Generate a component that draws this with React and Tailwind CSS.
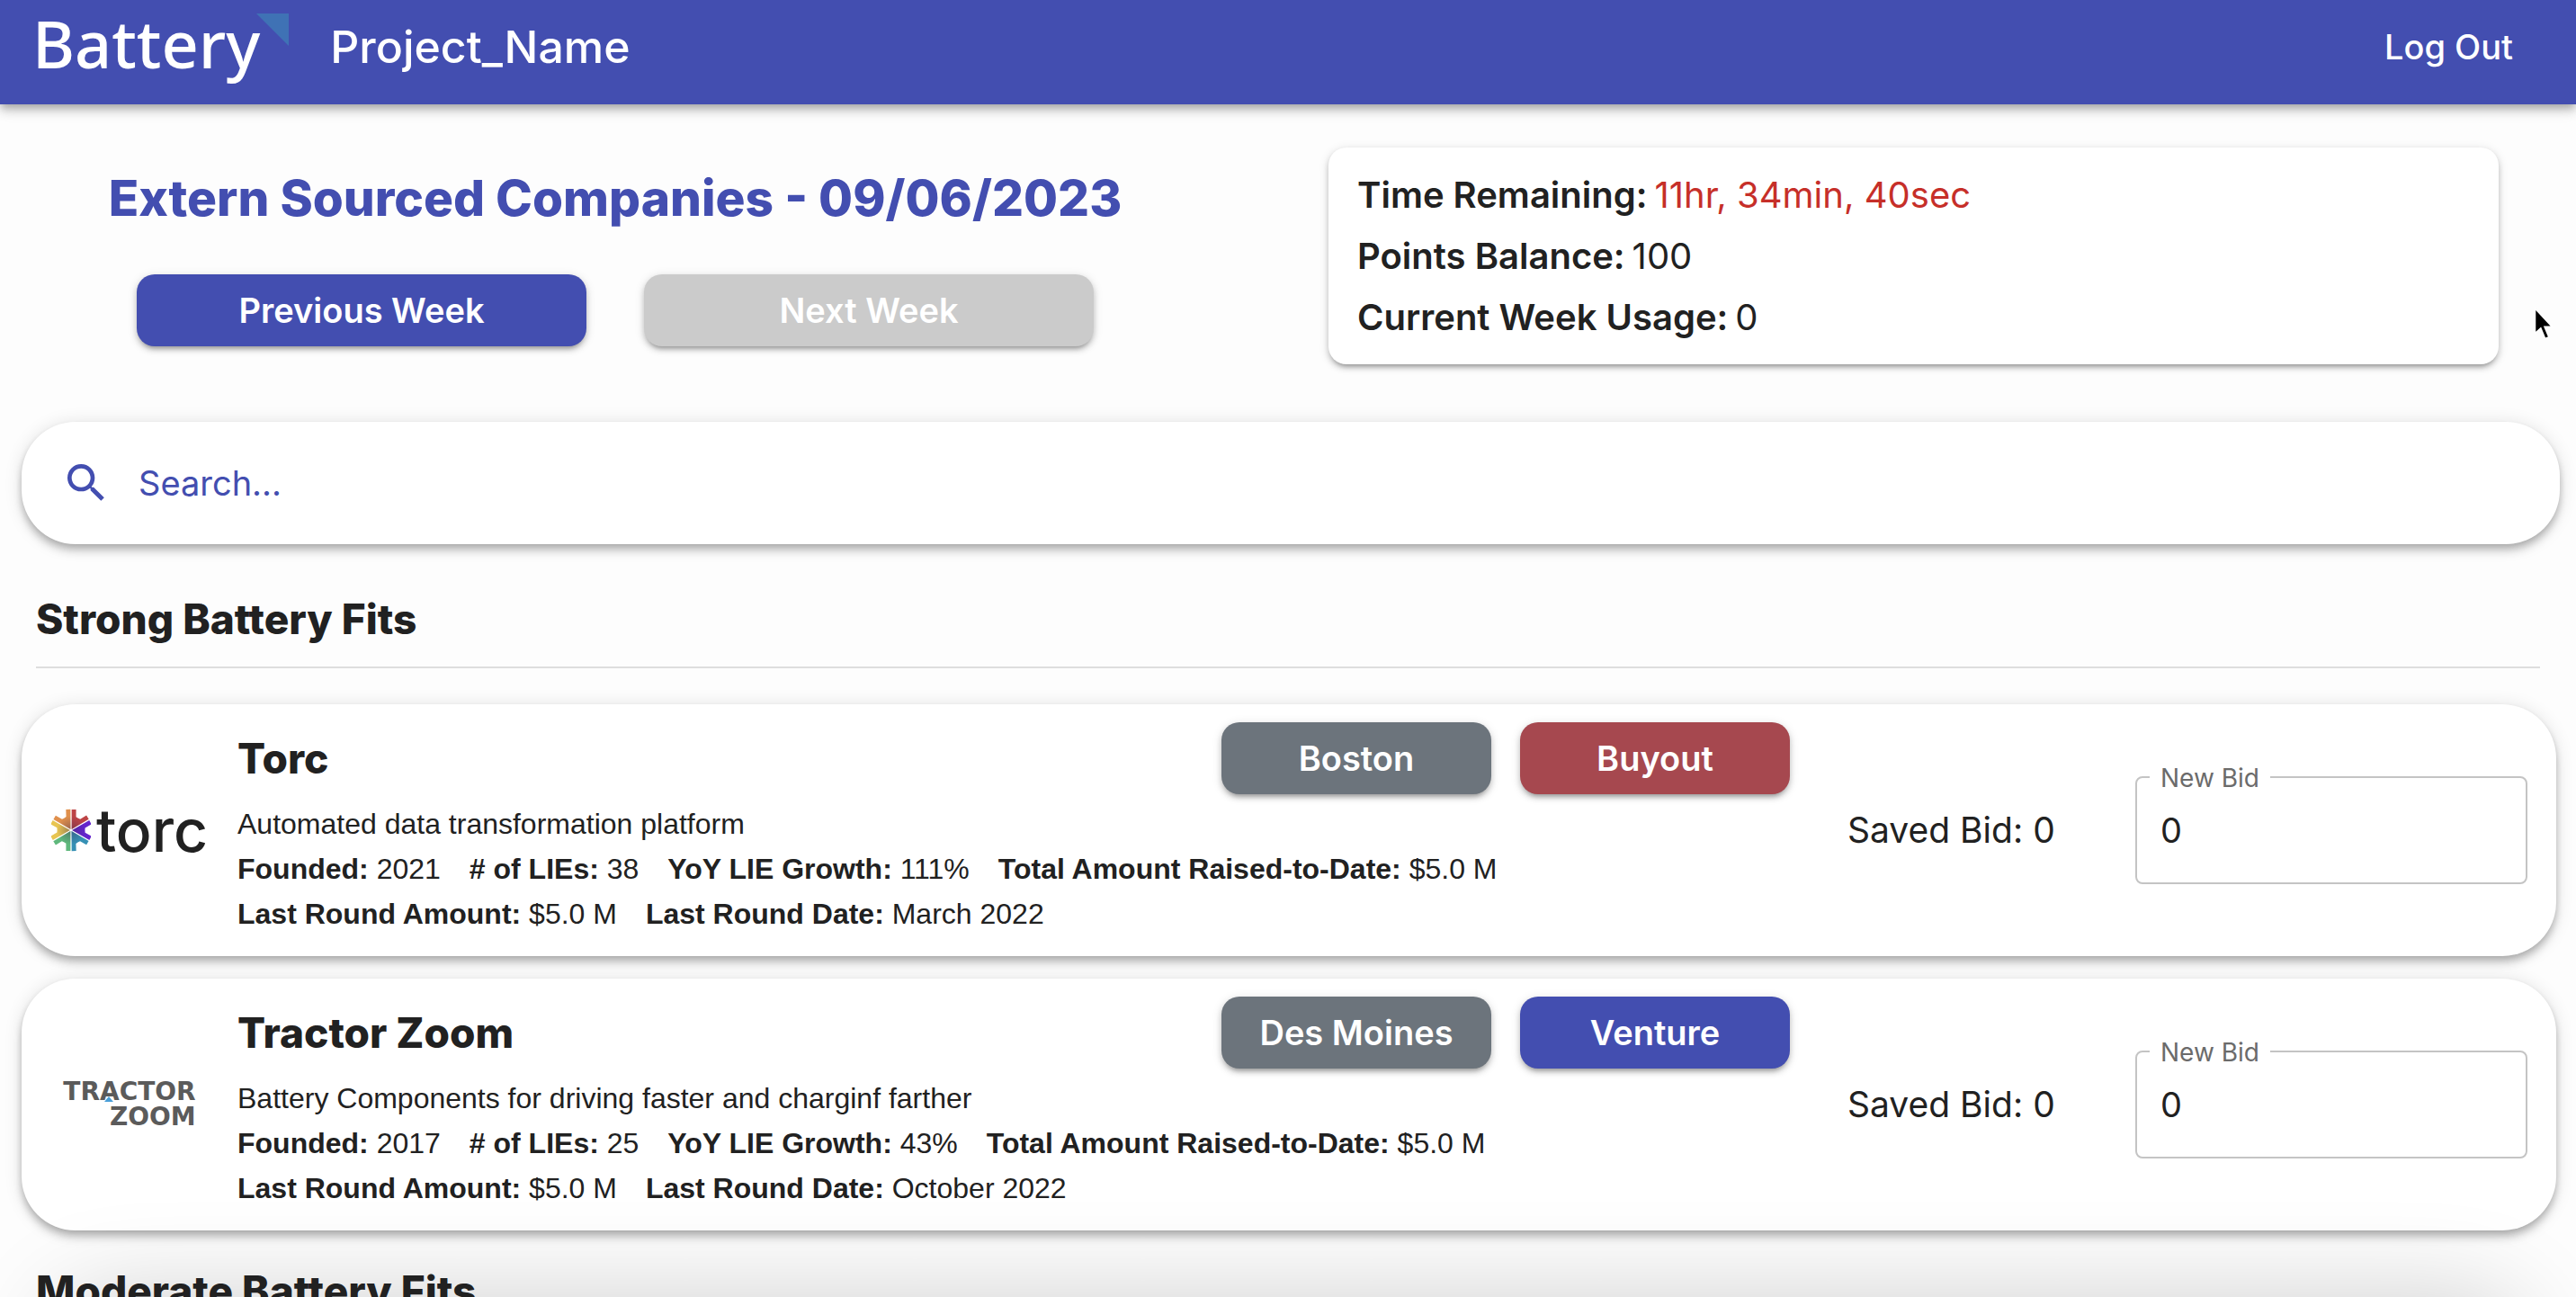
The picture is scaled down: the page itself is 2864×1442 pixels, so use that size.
import { MdSearch } from "react-icons/md";

const companies = [
  {
    id: "torc",
    name: "Torc",
    description: "Automated data transformation platform",
    founded: "2021",
    lies: "38",
    growth: "111%",
    raised: "$5.0 M",
    lastAmount: "$5.0 M",
    lastDate: "March 2022",
    city: "Boston",
    team: "Buyout",
    teamColor: "bg-[#a6484f]",
    Logo: TorcLogo,
  },
  {
    id: "tractor-zoom",
    name: "Tractor Zoom",
    description: "Battery Components for driving faster and charginf farther",
    founded: "2017",
    lies: "25",
    growth: "43%",
    raised: "$5.0 M",
    lastAmount: "$5.0 M",
    lastDate: "October 2022",
    city: "Des Moines",
    team: "Venture",
    teamColor: "bg-[#434eb0]",
    Logo: TractorZoomLogo,
  },
];

const wedges = [
  { angle: 0, color: "#bd4446" },
  { angle: 60, color: "#6424cc" },
  { angle: 120, color: "#3690b4" },
  { angle: 180, color: "#5fb87c" },
  { angle: 240, color: "#e8c552" },
  { angle: 300, color: "#e0904c" },
];

const raised =
  "shadow-[0_4px_8px_-2px_rgba(0,0,0,0.2),0_8px_10px_0_rgba(0,0,0,0.14),0_2px_20px_0_rgba(0,0,0,0.12)]";
const low =
  "shadow-[0_6px_4px_-4px_rgba(0,0,0,0.2),0_4px_6px_0_rgba(0,0,0,0.18),0_2px_12px_0_rgba(0,0,0,0.12)]";

function TorcLogo() {
  return (
    <div className="flex items-center gap-[6px]" role="img" aria-label="torc">
      <svg viewBox="-67 -71 134 142" className="h-12 w-11 shrink-0">
        <defs>
          <radialGradient id="hub" gradientUnits="userSpaceOnUse" cx="0" cy="0" r="48">
            <stop offset="0" stopColor="#3a2a50" stopOpacity="0.45" />
            <stop offset="1" stopColor="#3a2a50" stopOpacity="0" />
          </radialGradient>
        </defs>
        {wedges.map((w) => (
          <g key={w.angle} transform={`rotate(${w.angle})`}>
            <path d="M2-3V-70H17V-45L23-41L31-37L52-50L60-37Z" fill={w.color} />
            <path d="M2-3V-70H17V-45L23-41L31-37L52-50L60-37Z" fill="url(#hub)" />
          </g>
        ))}
      </svg>
      <span className="font-['Inter',sans-serif] text-[66px] leading-[48px] font-medium text-[#212121]">
        torc
      </span>
    </div>
  );
}

function TractorZoomLogo() {
  return (
    <div
      className="relative text-right font-['DejaVu_Sans',sans-serif] text-[28px] leading-7 font-bold text-[#5b5b5b]"
      role="img"
      aria-label="Tractor Zoom"
    >
      <div>TRACTOR</div>
      <div>ZOOM</div>
      <svg viewBox="0 0 10 6" className="absolute top-[19px] left-[46px] h-[6px] w-[10px]">
        <path d="M5 0L10 6H0Z" fill="#4a9fd8" />
      </svg>
    </div>
  );
}

function BatteryLogo() {
  return (
    <a href="#home" className="flex items-start text-white" aria-label="Battery">
      <span className="font-['Noto_Sans',sans-serif] text-[72px] leading-24 font-medium">
        Battery
      </span>
      <svg viewBox="0 0 36 36" className="-ml-1 mt-[15px] size-9">
        <path d="M0 0H36V36Z" fill="#3f72b5" />
      </svg>
    </a>
  );
}

function Fact({ label, value }) {
  return (
    <span className="mr-8 inline-block">
      <b>{label}:</b> {value}
    </span>
  );
}

function SectionTitle({ children }) {
  return <h2 className="text-[46px] leading-[66px] font-extrabold">{children}</h2>;
}

function CompanyCard({ company }) {
  const { Logo } = company;
  return (
    <article className={`flex min-h-[280px] items-center rounded-[60px] bg-white ${raised}`}>
      <div className="flex w-60 shrink-0 items-center justify-center">
        <Logo />
      </div>
      <div className="flex-1 self-start pt-5">
        <div className="flex items-center">
          <h3 className="flex-1 text-[46px] leading-[78px] font-extrabold">{company.name}</h3>
          <div className="flex gap-8 text-[38px] font-semibold text-white">
            <span className={`flex h-20 w-[300px] items-center justify-center rounded-[20px] bg-[#6c747c] ${low}`}>
              {company.city}
            </span>
            <span className={`flex h-20 w-[300px] items-center justify-center rounded-[20px] ${company.teamColor} ${low}`}>
              {company.team}
            </span>
          </div>
        </div>
        <div className="mt-2 font-['Liberation_Sans',sans-serif] text-[32px] leading-[50px]">
          <p>{company.description}</p>
          <p>
            <Fact label="Founded" value={company.founded} />
            <Fact label="# of LIEs" value={company.lies} />
            <Fact label="YoY LIE Growth" value={company.growth} />
            <Fact label="Total Amount Raised-to-Date" value={company.raised} />
          </p>
          <p>
            <Fact label="Last Round Amount" value={company.lastAmount} />
            <Fact label="Last Round Date" value={company.lastDate} />
          </p>
        </div>
      </div>
      <p className="w-[384px] shrink-0 pl-16 text-[39px]">Saved Bid: 0</p>
      <div className="relative mr-8 w-[436px] shrink-0">
        <input
          id={`bid-${company.id}`}
          type="text"
          inputMode="numeric"
          defaultValue="0"
          className="block h-[120px] w-full rounded-lg border-2 border-[#c4c4c4] bg-white px-[26px] text-[38px]"
        />
        <label
          htmlFor={`bid-${company.id}`}
          className="absolute -top-4 left-4 bg-white px-3 text-[28px] leading-9 text-[#6b6b6b]"
        >
          New Bid
        </label>
      </div>
    </article>
  );
}

export default function App() {
  return (
    <div className="relative h-screen overflow-hidden bg-[#fdfdfd] font-['Inter',sans-serif] text-[#212121]">
      <header className={`relative flex h-[116px] items-start bg-[#434eb0] pr-[70px] pl-9 text-white ${raised}`}>
        <BatteryLogo />
        <span className="ml-[46px] flex-1 text-[50px] leading-[104px] font-medium">Project_Name</span>
        <button type="button" className="text-[38px] leading-[104px] font-medium">
          Log Out
        </button>
      </header>

      <main className="px-6">
        <section className="grid grid-cols-[1320fr_1496fr] pt-12">
          <div className="flex flex-col items-center pt-4">
            <h1 className="text-[55px] leading-[80px] font-extrabold text-[#434eb0]">
              Extern Sourced Companies - 09/06/2023
            </h1>
            <div className="mt-[45px] flex gap-16 text-[38px] font-semibold text-white">
              <button type="button" className={`h-20 w-[500px] rounded-[20px] bg-[#434eb0] ${low}`}>
                Previous Week
              </button>
              <button type="button" disabled className={`h-20 w-[500px] rounded-[20px] bg-[#cbcbcb] ${low}`}>
                Next Week
              </button>
            </div>
          </div>
          <div className="pr-[62px] pl-[133px]">
            <dl className={`rounded-[20px] bg-white px-8 pt-[19px] pb-[18px] text-[40px] leading-[68px] ${low}`}>
              <div className="flex gap-2">
                <dt className="font-semibold">Time Remaining:</dt>
                <dd className="text-[#c62f29]">11hr, 34min, 40sec</dd>
              </div>
              <div className="flex gap-2">
                <dt className="font-semibold">Points Balance:</dt>
                <dd>100</dd>
              </div>
              <div className="flex gap-2">
                <dt className="font-semibold">Current Week Usage:</dt>
                <dd>0</dd>
              </div>
            </dl>
          </div>
        </section>

        <label className={`mt-16 mr-[-6px] flex h-[136px] items-center rounded-[60px] bg-white px-11 ${raised}`}>
          <MdSearch className="size-14 text-[#434eb0]" />
          <input
            type="text"
            aria-label="Search"
            placeholder="Search..."
            className="ml-[30px] flex-1 text-[38px] text-[#434eb0] outline-none placeholder:text-[#434eb0]"
          />
        </label>

        <div className="mx-4 mt-[50px] border-b-2 border-[#dedede] pb-5">
          <SectionTitle>Strong Battery Fits</SectionTitle>
        </div>
        <div className="mt-10 mr-[-2px] flex flex-col gap-[25px]">
          {companies.map((company) => (
            <CompanyCard key={company.id} company={company} />
          ))}
        </div>
        <div className="relative z-10 mx-4 mt-[34px]">
          <SectionTitle>Moderate Battery Fits</SectionTitle>
        </div>
      </main>

      <div className="absolute inset-x-[60px] top-full h-40 rounded-[60px] shadow-[0_0_110px_0_rgba(0,0,0,0.18)]" />

      <svg viewBox="0 0 20 34" className="absolute top-[342px] right-[25px] h-9 w-[22px]">
        <path
          d="M1 1V27L7 21.500L11.500 32.500L15.500 30.800L11 20.200H19Z"
          fill="#000"
          stroke="#fff"
          strokeWidth="1.500"
        />
      </svg>
    </div>
  );
}
